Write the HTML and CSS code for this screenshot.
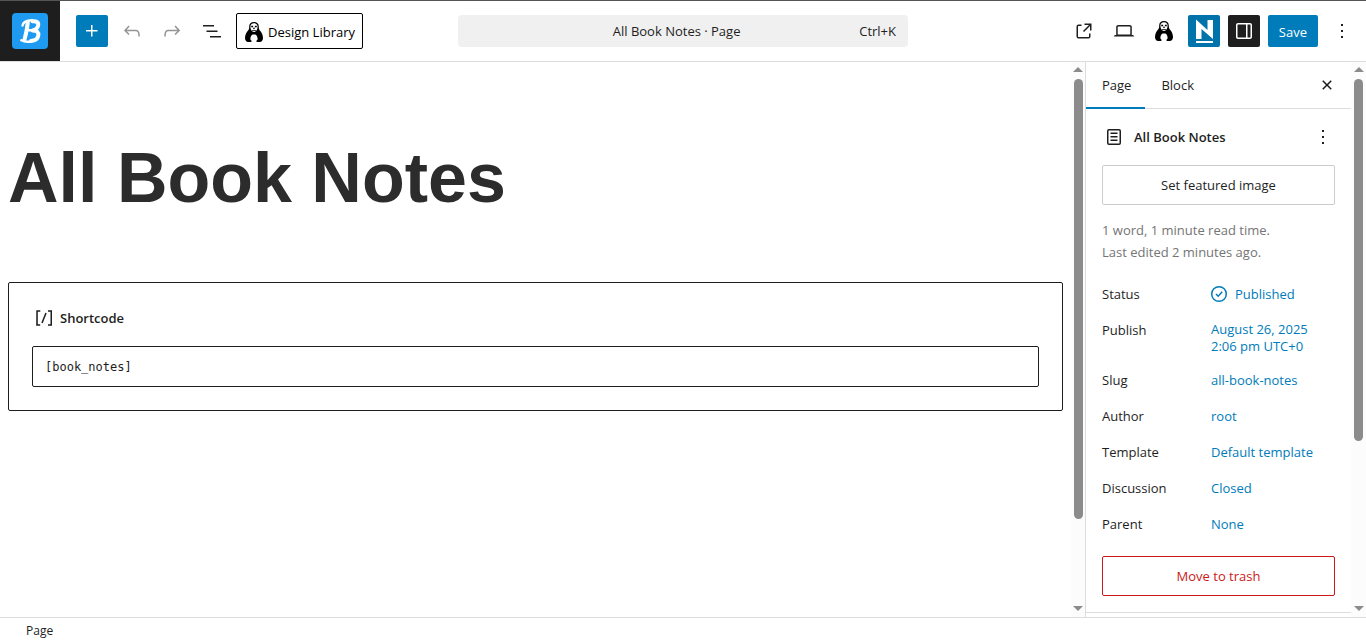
FILE: index.html
```html
<!DOCTYPE html>
<html lang="en">
<head>
<meta charset="utf-8">
<title>All Book Notes</title>
<link rel="stylesheet" href="styles.css">
</head>
<body>
<svg class="defs" aria-hidden="true">
  <symbol id="penguin" viewBox="0 0 20 22">
    <path d="M10 1C7 1 5.200 2.600 5.200 5.400c0 1.700-.2 2.800-.9 3.800C2.600 11 1 13.800 1 17c0 2.300 1.200 4 3.200 4h2.600c.9 0 1.100-.9.500-1.500l-.9-.9c-.2-2.400.7-4.200 2.200-5.100h2.800c1.500.9 2.400 2.700 2.200 5.100l-.9.9c-.6.6-.4 1.500.5 1.500h2.600c2 0 3.200-1.700 3.200-4 0-3.200-1.600-6-3.300-7.800-.7-1-.9-2.100-.9-3.800C14.800 2.600 13 1 10 1Z"/>
    <path fill="#fff" d="M10 2.200c-2.300 0-3.600 1.300-3.600 3.400 0 2.700 1.500 5.400 3.600 5.400s3.600-2.700 3.600-5.400c0-2.100-1.300-3.400-3.600-3.400Z"/>
    <path d="M7.200 4.800h1.900v1.400H7.200zM10.900 4.800h1.900v1.400h-1.900zM8.800 6.800h2.400L10 8.400zM8 9h4v.8H8z"/>
  </symbol>
  <symbol id="more" viewBox="0 0 24 24"><path d="M13 19h-2v-2h2v2zm0-6h-2v-2h2v2zm0-6h-2V5h2v2z"/></symbol>
</svg>
<div class="editor">
  <header class="topbar">
    <div class="tools">
      <a class="site" href="#" aria-label="View pages">
        <svg class="site-icon" viewBox="0 0 36 36"><rect width="36" height="36" rx="4" fill="#1e9bf0"/><g fill="none" stroke="#fff" stroke-linecap="round" stroke-linejoin="round"><path stroke-width="4" d="M15.800 9.500C15 16 14 21.500 12.500 26.500"/><path stroke-width="2.400" d="M10.500 12.500C11 9 14.500 7.400 20 7.200M16 17.300h5M9.300 27.300C12 28.800 16 29 19 28.500"/><path stroke-width="4" d="M20.500 8.200c4.300-.4 6.300 1.400 5.600 4.400-.6 2.700-2.600 4.300-5.600 4.800 4.400 0 6.400 2 5.800 5.200-.6 3.300-3.300 5.100-7.300 5.300"/></g></svg>
      </a>
      <button class="icon-btn primary" aria-label="Add block"><svg class="icon" viewBox="0 0 24 24"><path d="M11 12.500V17.500H12.500V12.500H17.500V11H12.500V6H11V11H6V12.500H11Z"/></svg></button>
      <button class="icon-btn dim" aria-label="Undo"><svg class="icon" viewBox="0 0 24 24"><path d="M18.300 11.700c-.6-.6-1.400-.9-2.300-.9H6.700l2.900-3.300-1.100-1-4.500 5L8.500 16l1-1-2.700-2.700H16c.5 0 .9.200 1.300.5 1 1 1 3.400 1 4.500v.3h1.500v-.2c0-1.500 0-4.300-1.500-5.700z"/></svg></button>
      <button class="icon-btn dim" aria-label="Redo"><svg class="icon" viewBox="0 0 24 24"><path d="M15.600 6.500l-1.100 1 2.900 3.300H8c-.9 0-1.700.3-2.300.9-1.400 1.500-1.400 4.200-1.400 5.600v.2h1.500v-.3c0-1.100 0-3.500 1-4.500.3-.3.7-.5 1.300-.5h9.200L14.500 15l1.100 1.100 4.600-4.600-4.600-5z"/></svg></button>
      <button class="icon-btn" aria-label="Document overview"><svg class="icon" viewBox="0 0 24 24"><path d="M3 6h11v1.500H3V6Zm3.500 5.500h11V13h-11v-1.500ZM21 17H10v1.500h11V17Z"/></svg></button>
      <button class="library"><svg class="penguin"><use href="#penguin"/></svg>Design Library</button>
    </div>
    <button class="command"><span class="command-title">All Book Notes · Page</span><span>Ctrl+K</span></button>
    <div class="actions">
      <a class="icon-btn" href="#" aria-label="View page"><svg class="icon" viewBox="0 0 24 24"><path d="M19.500 4.500h-7V6h4.440l-5.970 5.970 1.060 1.060L18 7.060v4.440h1.500v-7Zm-13 1a2 2 0 0 0-2 2v10a2 2 0 0 0 2 2h10a2 2 0 0 0 2-2v-3H17v3a.5.5 0 0 1-.5.5h-10a.5.5 0 0 1-.5-.5v-10a.5.5 0 0 1 .5-.5h3V5.500h-3Z"/></svg></a>
      <button class="icon-btn" aria-label="Preview"><svg class="icon" viewBox="0 0 24 24"><path d="M20.500 16h-.7V8c0-1.100-.9-2-2-2H6.200c-1.100 0-2 .9-2 2v8h-.7c-.8 0-1.500.7-1.500 1.500h20c0-.8-.7-1.500-1.500-1.500zM5.700 8c0-.3.2-.5.5-.5h11.600c.3 0 .5.2.5.5v7.600H5.700V8z"/></svg></button>
      <button class="icon-btn" aria-label="Stackable settings"><svg class="penguin"><use href="#penguin"/></svg></button>
      <button class="icon-btn brand" aria-label="Page options"><svg class="brand-icon" viewBox="0 0 32 32"><path d="M8 4.500 19.500 15V5H25v19L13.500 14V24H8Z"/><path d="M8 26h17v2H8z"/></svg></button>
      <button class="icon-btn dark" aria-label="Settings"><svg class="icon" viewBox="0 0 24 24"><path d="M18 4H6c-1.100 0-2 .9-2 2v12c0 1.100.9 2 2 2h12c1.100 0 2-.9 2-2V6c0-1.100-.9-2-2-2zm-4 14.500H6c-.3 0-.5-.2-.5-.5V6c0-.3.2-.5.5-.5h8v13zm4.500-.5c0 .3-.2.5-.5.5h-2.500v-13H18c.3 0 .5.2.5.5v12z"/></svg></button>
      <button class="save">Save</button>
      <button class="icon-btn" aria-label="Options"><svg class="icon"><use href="#more"/></svg></button>
    </div>
  </header>
  <div class="workspace">
    <main class="canvas">
      <h1 class="page-title">All Book Notes</h1>
      <section class="shortcode">
        <label class="shortcode-label" for="code"><svg class="icon" viewBox="0 0 24 24"><path d="M16 4.200v1.500h2.500v12.500H16v1.500h4V4.200h-4zM4.200 19.800h4v-1.500H5.800V5.800h2.500V4.200h-4l-.1 15.600zm5.100-3.100l1.400.6 4-10-1.400-.6-4 10z"/></svg>Shortcode</label>
        <input class="shortcode-input" id="code" type="text" value="[book_notes]" spellcheck="false">
      </section>
    </main>
    <div class="scrollbar narrow" aria-hidden="true"><i class="arrow up"></i><div class="track"><div class="thumb" style="height:84%"></div></div><i class="arrow down"></i></div>
    <aside class="sidebar">
      <div class="tabs">
        <button class="tab active">Page</button>
        <button class="tab">Block</button>
        <button class="close" aria-label="Close settings"><svg class="icon" viewBox="0 0 24 24"><path d="M12 13.060l3.712 3.713 1.061-1.060L13.061 12l3.712-3.712-1.060-1.060L12 10.938 8.288 7.227l-1.061 1.060L10.939 12l-3.712 3.712 1.060 1.061L12 13.061z"/></svg></button>
      </div>
      <div class="panel">
        <div class="card">
          <svg class="icon" viewBox="0 0 24 24"><path d="M15.500 7.500h-7V9h7V7.500Zm-7 3.500h7v1.500h-7V11Zm7 3.500h-7V16h7v-1.500Z"/><path fill-rule="evenodd" d="M17 4H7a2 2 0 0 0-2 2v12a2 2 0 0 0 2 2h10a2 2 0 0 0 2-2V6a2 2 0 0 0-2-2ZM7 5.500h10a.5.5 0 0 1 .5.5v12a.5.5 0 0 1-.5.5H7a.5.5 0 0 1-.5-.5V6a.5.5 0 0 1 .5-.5Z"/></svg>
          <h2 class="card-title">All Book Notes</h2>
          <button class="card-more" aria-label="Actions"><svg class="icon"><use href="#more"/></svg></button>
        </div>
        <button class="wide">Set featured image</button>
        <p class="meta">1 word, 1 minute read time.<br>Last edited 2 minutes ago.</p>
        <dl class="rows">
          <dt>Status</dt><dd><button class="value status"><svg class="icon" viewBox="0 0 24 24"><circle cx="12" cy="12" r="7.300" fill="none" stroke="currentColor" stroke-width="1.500"/><path fill="none" stroke="currentColor" stroke-width="1.500" d="m9 12 2.200 2.200 4-4.400"/></svg>Published</button></dd>
          <dt>Publish</dt><dd><button class="value date">August 26, 2025<br>2:06 pm UTC+0</button></dd>
          <dt>Slug</dt><dd><button class="value">all-book-notes</button></dd>
          <dt>Author</dt><dd><button class="value">root</button></dd>
          <dt>Template</dt><dd><button class="value">Default template</button></dd>
          <dt>Discussion</dt><dd><button class="value">Closed</button></dd>
          <dt>Parent</dt><dd><button class="value">None</button></dd>
        </dl>
        <button class="wide danger">Move to trash</button>
      </div>
    </aside>
    <div class="scrollbar" aria-hidden="true"><i class="arrow up"></i><div class="track"><div class="thumb" style="height:69%"></div></div><i class="arrow down"></i></div>
  </div>
  <footer class="footer">Page</footer>
</div>
</body>
</html>
```
FILE: styles.css
```css
* { box-sizing: border-box; }
body {
  margin: 0;
  background: #fff;
  color: #1e1e1e;
  font: 13px/20px "Segoe UI", "Open Sans", "Noto Sans", sans-serif;
}
button { font: inherit; color: inherit; background: none; border: 0; padding: 0; margin: 0; }
h1, h2, p, dl, dd { margin: 0; }
.defs { position: absolute; width: 0; height: 0; }
.editor { display: flex; flex-direction: column; height: 100vh; border-top: 1px solid #555; }
.icon { width: 24px; height: 24px; fill: currentColor; flex: none; }

.topbar { display: grid; grid-template-columns: 1fr 450px 1fr; align-items: center; border-bottom: 1px solid #ddd; flex: none; }
.tools, .actions { display: flex; align-items: center; gap: 8px; }
.actions { justify-content: flex-end; padding-right: 8px; }
.site { display: flex; align-items: center; justify-content: center; width: 60px; height: 60px; background: #1e1e1e; margin-right: 8px; }
.site-icon { width: 36px; height: 36px; }
.icon-btn { display: flex; align-items: center; justify-content: center; width: 32px; height: 32px; border-radius: 2px; color: #1e1e1e; }
.primary { background: #007cba; color: #fff; }
.dim { color: #949494; }
.dark { background: #1e1e1e; color: #fff; }
.brand { background: #0073aa; color: #fff; }
.brand-icon { width: 32px; height: 32px; fill: #fff; }
.penguin { width: 20px; height: 22px; fill: #000; flex: none; }
.library { display: flex; align-items: center; gap: 4px; height: 36px; padding: 2px 7px 0; border: 1px solid #000; border-radius: 2px; color: #000; white-space: nowrap; }
.command { display: flex; align-items: center; height: 32px; padding: 0 12px 0 36px; border-radius: 4px; background: #f0f0f0; }
.command-title { flex: 1; }
.save { height: 32px; padding: 2px 11px 0; border-radius: 2px; background: #007cba; color: #fff; }

.workspace { display: flex; flex: 1; min-height: 0; }
.canvas { flex: 1; min-width: 0; padding: 76px 8px 0; }
.page-title { font: bold 70px/80px "Liberation Sans", Arial, sans-serif; color: #2c2c2c; }
.shortcode { margin-top: 64px; padding: 23px; border: 1px solid #1e1e1e; border-radius: 2px; }
.shortcode-label { display: flex; align-items: center; gap: 4px; height: 24px; margin-bottom: 16px; font-weight: 600; }
.shortcode-input { display: block; width: 100%; height: 41px; padding: 0 12px; border: 1px solid #1e1e1e; border-radius: 2px; font: 12px/20px "DejaVu Sans Mono", monospace; color: #1e1e1e; }

.scrollbar { display: flex; flex-direction: column; align-items: center; width: 15px; padding: 5px 0 6px; background: #fcfcfc; flex: none; }
.narrow { width: 14px; align-items: flex-end; padding-right: 2px; }
.track { flex: 1; width: 9px; margin: 7px 0 3px; }
.thumb { border-radius: 5px; background: #8b8b8b; }
.arrow { border: 5px solid transparent; border-top-width: 0; border-bottom-width: 0; }
.up { border-bottom: 5px solid #8b8b8b; }
.down { border-top: 5px solid #8b8b8b; }

.sidebar { width: 266px; flex: none; border-left: 1px solid #ddd; overflow: hidden; }
.tabs { display: flex; height: 47px; border-bottom: 1px solid #ddd; }
.tab { height: 47px; padding: 0 14px 0 16px; border-bottom: 2px solid transparent; }
.active { border-color: #007cba; }
.close { display: flex; align-items: center; margin-left: auto; margin-right: 12px; }
.panel { display: flex; flex-direction: column; padding: 16px; border-bottom: 1px solid #ddd; }
.card { display: flex; align-items: center; gap: 8px; height: 24px; margin-bottom: 16px; }
.card-title { flex: 1; font-size: 13px; line-height: 20px; font-weight: 600; }
.card-more { display: flex; }
.wide { width: 100%; height: 40px; border: 1px solid #ccc; border-radius: 2px; }
.danger { margin-top: 16px; border-color: #cc1818; color: #cc1818; }
.meta { margin: 14px 0 15px; line-height: 22px; color: #757575; }
.rows { display: grid; grid-template-columns: 101px 1fr; gap: 4px 8px; }
.rows dt { line-height: 32px; }
.value { display: block; min-height: 32px; padding: 6px 0; line-height: 17px; text-align: left; color: #007cba; white-space: nowrap; }
.date { padding: 7px 0 5px; }
.status { display: flex; align-items: center; gap: 4px; padding: 0; margin-left: -4px; }
.footer { flex: none; padding: 3px 26px; border-top: 1px solid #ddd; font-size: 12px; line-height: 20px; height: 23px; }
```
